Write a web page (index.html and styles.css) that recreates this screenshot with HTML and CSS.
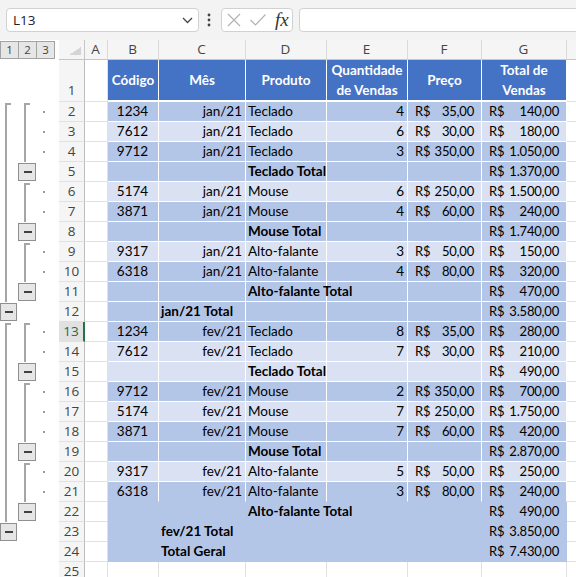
FILE: index.html
```html
<!DOCTYPE html>
<html>
<head>
    <meta charset="UTF-8">
    <link rel="stylesheet" href="styles.css">
</head>
<body>
    <div class="topbar">
        <div class="namebox">
            <span>L13</span>
            <svg width="11" height="7" viewBox="0 0 11 7"><polyline points="1,1 5.5,5.5 10,1" fill="none" stroke="#444" stroke-width="1.3"/></svg>
        </div>
        <svg class="vdots" width="4" height="14" viewBox="0 0 4 14"><circle cx="2" cy="2" r="1.4"/><circle cx="2" cy="7" r="1.4"/><circle cx="2" cy="12" r="1.4"/></svg>
        <div class="fxbox">
            <svg width="16" height="16" viewBox="0 0 16 16"><path d="M2 2 L14 14 M14 2 L2 14" stroke="#b3b3b3" stroke-width="1.2" fill="none"/></svg>
            <svg width="18" height="16" viewBox="0 0 18 16"><polyline points="1.5,8 6.5,13 16.5,2.5" stroke="#b3b3b3" stroke-width="1.2" fill="none"/></svg>
            <span class="fx">fx</span>
        </div>
        <div class="formula"></div>
    </div>

    <div class="sheet">
        <div class="outline">
            <div class="levels">
                <div class="level">1</div>
                <div class="level">2</div>
                <div class="level">3</div>
            </div>
            <svg class="groups" width="59" height="520" viewBox="0 0 59 520">
                <g fill="none" stroke="#a6a6a6" stroke-width="2">
                    <path d="M11 44 H6 V242"/>
                    <path d="M11 264 H6 V462"/>
                    <path d="M30 44 H25 V102"/>
                    <path d="M30 124 H25 V162"/>
                    <path d="M30 184 H25 V222"/>
                    <path d="M30 264 H25 V302"/>
                    <path d="M30 324 H25 V382"/>
                    <path d="M30 404 H25 V442"/>
                </g>
                <g fill="#e6e6e6" stroke="#8f8f8f">
                    <rect x="18.5" y="103.5" width="17" height="17"/>
                    <rect x="18.5" y="163.5" width="17" height="17"/>
                    <rect x="18.5" y="223.5" width="17" height="17"/>
                    <rect x="18.5" y="303.5" width="17" height="17"/>
                    <rect x="18.5" y="383.5" width="17" height="17"/>
                    <rect x="18.5" y="443.5" width="17" height="17"/>
                    <rect x="0.5" y="243.5" width="16" height="17"/>
                    <rect x="0.5" y="463.5" width="16" height="17"/>
                </g>
                <g stroke="#404040" stroke-width="2">
                    <path d="M24 112 H32 M24 172 H32 M24 232 H32 M24 312 H32 M24 392 H32 M24 452 H32"/>
                    <path d="M5 252 H13 M5 472 H13"/>
                </g>
                <g fill="#9a9a9a">
                    <rect x="43" y="51" width="2" height="2"/>
                    <rect x="43" y="71" width="2" height="2"/>
                    <rect x="43" y="91" width="2" height="2"/>
                    <rect x="43" y="131" width="2" height="2"/>
                    <rect x="43" y="151" width="2" height="2"/>
                    <rect x="43" y="191" width="2" height="2"/>
                    <rect x="43" y="211" width="2" height="2"/>
                    <rect x="43" y="271" width="2" height="2"/>
                    <rect x="43" y="291" width="2" height="2"/>
                    <rect x="43" y="331" width="2" height="2"/>
                    <rect x="43" y="351" width="2" height="2"/>
                    <rect x="43" y="371" width="2" height="2"/>
                    <rect x="43" y="411" width="2" height="2"/>
                    <rect x="43" y="431" width="2" height="2"/>
                </g>
            </svg>
        </div>

        <table class="grid">
            <colgroup>
                <col class="c-rh"><col class="c-a"><col class="c-b"><col class="c-c"><col class="c-d">
                <col class="c-e"><col class="c-f"><col class="c-g"><col class="c-h">
            </colgroup>
            <tr class="cols">
                <td class="corner"></td><td>A</td><td>B</td><td>C</td><td>D</td><td>E</td><td>F</td><td>G</td><td></td>
            </tr>
            <tr class="head">
                <td class="rh">1</td><td></td><td>Código</td><td>Mês</td><td>Produto</td><td>Quantidade<br>de Vendas</td><td>Preço</td><td>Total de<br>Vendas</td><td></td>
            </tr>
            <tr class="dk">
                <td class="rh">2</td><td></td><td>1234</td><td>jan/21</td><td>Teclado</td><td>4</td><td class="money"><span>R$</span>35,00</td><td class="money"><span>R$</span>140,00</td><td></td>
            </tr>
            <tr class="lt">
                <td class="rh">3</td><td></td><td>7612</td><td>jan/21</td><td>Teclado</td><td>6</td><td class="money"><span>R$</span>30,00</td><td class="money"><span>R$</span>180,00</td><td></td>
            </tr>
            <tr class="dk">
                <td class="rh">4</td><td></td><td>9712</td><td>jan/21</td><td>Teclado</td><td>3</td><td class="money"><span>R$</span>350,00</td><td class="money"><span>R$</span>1.050,00</td><td></td>
            </tr>
            <tr class="dk">
                <td class="rh">5</td><td></td><td></td><td></td><td class="sub">Teclado Total</td><td></td><td></td><td class="money"><span>R$</span>1.370,00</td><td></td>
            </tr>
            <tr class="lt">
                <td class="rh">6</td><td></td><td>5174</td><td>jan/21</td><td>Mouse</td><td>6</td><td class="money"><span>R$</span>250,00</td><td class="money"><span>R$</span>1.500,00</td><td></td>
            </tr>
            <tr class="dk">
                <td class="rh">7</td><td></td><td>3871</td><td>jan/21</td><td>Mouse</td><td>4</td><td class="money"><span>R$</span>60,00</td><td class="money"><span>R$</span>240,00</td><td></td>
            </tr>
            <tr class="dk">
                <td class="rh">8</td><td></td><td></td><td></td><td class="sub">Mouse Total</td><td></td><td></td><td class="money"><span>R$</span>1.740,00</td><td></td>
            </tr>
            <tr class="lt">
                <td class="rh">9</td><td></td><td>9317</td><td>jan/21</td><td>Alto-falante</td><td>3</td><td class="money"><span>R$</span>50,00</td><td class="money"><span>R$</span>150,00</td><td></td>
            </tr>
            <tr class="dk">
                <td class="rh">10</td><td></td><td>6318</td><td>jan/21</td><td>Alto-falante</td><td>4</td><td class="money"><span>R$</span>80,00</td><td class="money"><span>R$</span>320,00</td><td></td>
            </tr>
            <tr class="dk">
                <td class="rh">11</td><td></td><td></td><td></td><td class="sub">Alto-falante Total</td><td></td><td></td><td class="money"><span>R$</span>470,00</td><td></td>
            </tr>
            <tr class="dk">
                <td class="rh">12</td><td></td><td></td><td class="lbl">jan/21 Total</td><td></td><td></td><td></td><td class="money"><span>R$</span>3.580,00</td><td></td>
            </tr>
            <tr class="dk">
                <td class="rh active">13</td><td></td><td>1234</td><td>fev/21</td><td>Teclado</td><td>8</td><td class="money"><span>R$</span>35,00</td><td class="money"><span>R$</span>280,00</td><td></td>
            </tr>
            <tr class="lt">
                <td class="rh">14</td><td></td><td>7612</td><td>fev/21</td><td>Teclado</td><td>7</td><td class="money"><span>R$</span>30,00</td><td class="money"><span>R$</span>210,00</td><td></td>
            </tr>
            <tr class="lt">
                <td class="rh">15</td><td></td><td></td><td></td><td class="sub">Teclado Total</td><td></td><td></td><td class="money"><span>R$</span>490,00</td><td></td>
            </tr>
            <tr class="dk">
                <td class="rh">16</td><td></td><td>9712</td><td>fev/21</td><td>Mouse</td><td>2</td><td class="money"><span>R$</span>350,00</td><td class="money"><span>R$</span>700,00</td><td></td>
            </tr>
            <tr class="lt">
                <td class="rh">17</td><td></td><td>5174</td><td>fev/21</td><td>Mouse</td><td>7</td><td class="money"><span>R$</span>250,00</td><td class="money"><span>R$</span>1.750,00</td><td></td>
            </tr>
            <tr class="dk">
                <td class="rh">18</td><td></td><td>3871</td><td>fev/21</td><td>Mouse</td><td>7</td><td class="money"><span>R$</span>60,00</td><td class="money"><span>R$</span>420,00</td><td></td>
            </tr>
            <tr class="dk">
                <td class="rh">19</td><td></td><td></td><td></td><td class="sub">Mouse Total</td><td></td><td></td><td class="money"><span>R$</span>2.870,00</td><td></td>
            </tr>
            <tr class="lt">
                <td class="rh">20</td><td></td><td>9317</td><td>fev/21</td><td>Alto-falante</td><td>5</td><td class="money"><span>R$</span>50,00</td><td class="money"><span>R$</span>250,00</td><td></td>
            </tr>
            <tr class="dk end">
                <td class="rh">21</td><td></td><td>6318</td><td>fev/21</td><td>Alto-falante</td><td>3</td><td class="money"><span>R$</span>80,00</td><td class="money"><span>R$</span>240,00</td><td></td>
            </tr>
            <tr class="dk flat">
                <td class="rh">22</td><td></td><td></td><td></td><td class="sub">Alto-falante Total</td><td></td><td></td><td class="money"><span>R$</span>490,00</td><td></td>
            </tr>
            <tr class="dk flat">
                <td class="rh">23</td><td></td><td></td><td class="lbl">fev/21 Total</td><td></td><td></td><td></td><td class="money"><span>R$</span>3.850,00</td><td></td>
            </tr>
            <tr class="dk flat">
                <td class="rh">24</td><td></td><td></td><td class="lbl">Total Geral</td><td></td><td></td><td></td><td class="money"><span>R$</span>7.430,00</td><td></td>
            </tr>
            <tr>
                <td class="rh">25</td><td></td><td></td><td></td><td></td><td></td><td></td><td></td><td></td>
            </tr>
        </table>
    </div>
</body>
</html>
```

FILE: styles.css
```css
body {
    margin: 0;
    padding: 0;
    width: 576px;
    height: 577px;
    overflow: hidden;
    background: #fff;
    font-family: "Open Sans", "Noto Sans", sans-serif;
}

/* formula bar */
div.topbar {
    display: flex;
    align-items: center;
    height: 40px;
    padding-left: 6px;
    background: #f3f3f3;
    box-sizing: border-box;
    overflow: hidden;
}
div.namebox {
    flex: none;
    display: flex;
    align-items: center;
    justify-content: space-between;
    box-sizing: border-box;
    width: 193px;
    height: 24px;
    padding: 0 5px 0 6px;
    background: #fff;
    border: 1px solid #d1d1d1;
    border-radius: 4px;
    font-size: 13.5px;
    color: #222;
}
svg.vdots {
    flex: none;
    fill: #444;
    margin: 0 10px 0 8px;
}
div.fxbox {
    flex: none;
    display: flex;
    align-items: center;
    box-sizing: border-box;
    width: 72px;
    height: 24px;
    padding-left: 4px;
    gap: 7px;
    background: #fff;
    border: 1px solid #d1d1d1;
    border-radius: 4px;
}
span.fx {
    font-family: "Liberation Serif", "DejaVu Serif", serif;
    font-style: italic;
    font-size: 19px;
    color: #333;
    margin-left: 1px;
}
div.formula {
    flex: none;
    width: 300px;
    height: 24px;
    margin-left: 6px;
    box-sizing: border-box;
    background: #fff;
    border: 1px solid #d1d1d1;
    border-radius: 4px;
}

/* sheet */
div.sheet {
    display: flex;
    align-items: flex-start;
}
div.outline {
    flex: none;
    width: 59px;
}
div.levels {
    display: flex;
    height: 20px;
    padding-top: 1px;
    box-sizing: border-box;
}
div.level {
    box-sizing: border-box;
    width: 19px;
    height: 18px;
    margin-right: -1px;
    background: #e6e6e6;
    border: 1px solid #a3a3a3;
    font-size: 11.5px;
    line-height: 16px;
    text-align: center;
    color: #444;
}
svg.groups {
    display: block;
}

table.grid {
    flex: none;
    table-layout: fixed;
    border-collapse: separate;
    border-spacing: 0;
    width: 588px;
}
col.c-rh { width: 26px; }
col.c-a { width: 23px; }
col.c-b { width: 51px; }
col.c-c { width: 87px; }
col.c-d { width: 81px; }
col.c-e { width: 81px; }
col.c-f { width: 74px; }
col.c-g { width: 85px; }
col.c-h { width: 80px; }

.grid tr {
    height: 20px;
}
.grid tr.head {
    height: 42px;
}
.grid td {
    padding: 0 3px 0 2px;
    border-right: 1px solid #e1e1e1;
    border-bottom: 1px solid #e1e1e1;
    font-family: Lato, "Noto Sans", sans-serif;
    font-size: 13.5px;
    line-height: 19px;
    color: #000;
    white-space: nowrap;
    overflow: visible;
}
.grid td:nth-child(3) { text-align: center; }
.grid td:nth-child(4),
.grid td:nth-child(6) { text-align: right; }
.grid td.sub {
    font-weight: bold;
}
.grid td.lbl {
    text-align: left;
    font-weight: bold;
}
.grid td.money {
    text-align: right;
    padding: 0 7px 0 7px;
    font-size: 13px;
    letter-spacing: -0.2px;
}
.grid td.money span {
    float: left;
}

/* column and row headers */
.grid tr.cols td {
    background: #f5f5f5;
    border-right-color: #dadada;
    border-bottom-color: #c6c6c6;
    font-family: "Open Sans", "Noto Sans", sans-serif;
    font-size: 13.5px;
    color: #444;
    text-align: center;
}
.grid tr.cols td.corner {
    border-right-color: #c6c6c6;
    background: #f5f5f5 linear-gradient(to top left, #d4d4d4 50%, transparent 50%) no-repeat right 3px bottom 4px / 12px 8px;
}
.grid td.rh {
    background: #f5f5f5;
    border-right-color: #bdbdbd;
    border-bottom-color: #e1e1e1;
    padding: 0;
    font-family: "Open Sans", "Noto Sans", sans-serif;
    font-size: 13.5px;
    color: #444;
    text-align: center;
}
.grid td.rh.active {
    background: #e1e1e1;
    color: #1b6e3e;
    border-right: 2px solid #217346;
}

/* table body */
.grid tr.head td {
    vertical-align: middle;
}
.grid tr.head td.rh {
    vertical-align: bottom;
    padding-bottom: 1px;
}
.grid tr.head td:nth-child(n+3):nth-child(-n+8) {
    background: #4472c4;
    color: #fff;
    font-weight: bold;
    text-align: center;
    line-height: 20px;
    padding: 0;
    border-color: #fff;
    border-bottom-width: 2px;
}
.grid tr.dk td:nth-child(n+3):nth-child(-n+8) {
    background: #b4c6e7;
    border-color: #fff;
}
.grid tr.lt td:nth-child(n+3):nth-child(-n+8) {
    background: #d9e1f2;
    border-color: #fff;
}
.grid tr.end td:nth-child(n+3):nth-child(-n+8) {
    border-bottom-color: #b4c6e7;
}
.grid tr.flat td:nth-child(n+3):nth-child(-n+8) {
    border-color: #b4c6e7;
}
```
